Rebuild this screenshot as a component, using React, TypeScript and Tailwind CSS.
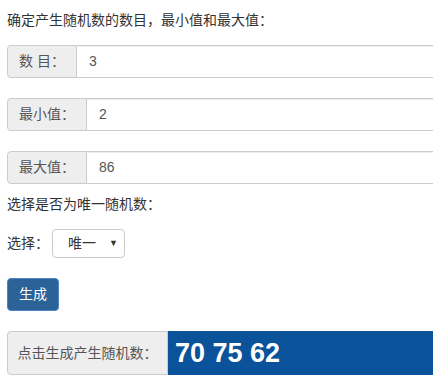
// RANDOM NUMBER FORM
// Sections: Count/Min/Max inputs · Unique select · Generate · Result

const font = { fontFamily: '"Liberation Sans", "Noto Sans CJK SC", sans-serif' }

function InputGroup({ label, value, addonW }: { label: string; value: string; addonW: string }) {
  return (
    <div className="flex h-[33px] w-[520px]">
      <span
        className={`${addonW} flex shrink-0 items-center justify-center rounded-l-[4px] border border-[#ccc] bg-[#eee] text-[14px] text-[#555]`}
      >
        {label}
      </span>
      <div className="flex flex-1 items-center rounded-r-[4px] border border-l-0 border-[#ccc] bg-white px-3 text-[14px] text-[#555] shadow-[inset_0_1px_1px_rgba(0,0,0,0.075)]">
        {value}
      </div>
    </div>
  )
}

export default function App() {
  return (
    <div className="w-[433px] h-[379px] overflow-hidden bg-white text-[#333]" style={font}>
      <div className="px-[7px] pt-[11px]">
        <p className="text-[14px] leading-[18px]">确定产生随机数的数目，最小值和最大值：</p>

        <div className="mt-[16px] space-y-[20px]">
          <InputGroup label="数 目：" value="3" addonW="w-[70px]" />
          <InputGroup label="最小值：" value="2" addonW="w-[80px]" />
          <InputGroup label="最大值：" value="86" addonW="w-[80px]" />
        </div>

        <p className="mt-[11px] text-[14px] leading-[18px]">选择是否为唯一随机数：</p>

        <div className="mt-[16px] flex items-center">
          <span className="text-[14px]">选择：</span>
          <div className="ml-[3px] flex h-[29px] w-[73px] items-center justify-between rounded-[4px] border border-[#ccc] bg-white pl-[15px] pr-[6px] text-[14px] text-[#333]">
            <span>唯一</span>
            <span className="text-[9px] text-[#333]">▼</span>
          </div>
        </div>

        <button className="mt-[20px] flex h-[33px] w-[52px] items-center justify-center rounded-[4px] border border-[#4a86c4] bg-[#2b6297] text-[14px] text-white">
          生成
        </button>

        <div className="mt-[20px] flex h-[44px] w-[520px]">
          <span className="flex w-[161px] shrink-0 items-center justify-center rounded-l-[4px] border border-[#ccc] bg-[#eee] text-[14px] text-[#555]">
            点击生成产生随机数：
          </span>
          <div className="flex flex-1 items-center rounded-r-[4px] bg-[#0a5299] pl-[7px] text-[27px] font-bold text-white">
            70 75 62
          </div>
        </div>
      </div>
    </div>
  )
}
